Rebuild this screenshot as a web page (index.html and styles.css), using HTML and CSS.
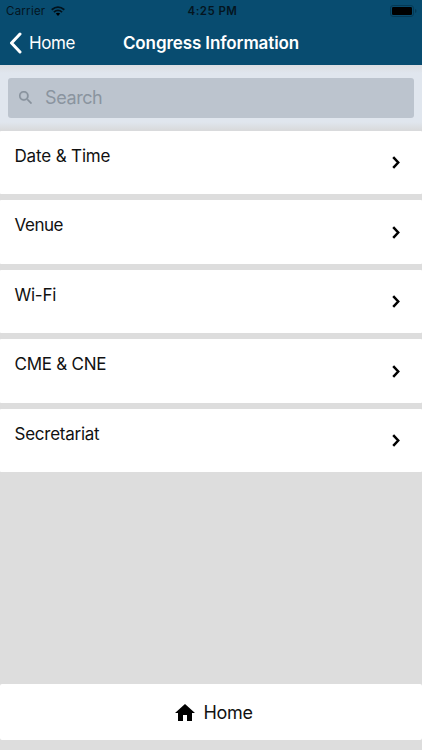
FILE: index.html
```
<!DOCTYPE html>
<html lang="en">
<head>
<meta charset="utf-8">
<title>Congress Information</title>
<link rel="stylesheet" href="styles.css">
</head>
<body>
<div class="app">
  <header class="top">
    <div class="status">
      <div class="carrier"><span class="carrier-name">Carrier</span>
        <svg class="wifi" viewBox="0 0 14 10"><path d="M.7 3.7Q7-1.5 13.3 3.7M2.9 6.1Q7 2.7 11.1 6.1" fill="none" stroke="#02121c" stroke-width="1.8"/><path d="M4.8 7.6Q7 5.9 9.2 7.6L7 10Z"/></svg>
      </div>
      <span class="clock">4:25 PM</span>
      <svg class="battery" viewBox="0 0 27 12"><rect x=".5" y=".5" width="23" height="11" rx="2.7" fill="none" stroke="#053954"/><rect x="2" y="2" width="20" height="8" rx="1.3"/><path d="M25 4q1.5.4 1.5 2T25 8z" fill="#053954"/></svg>
    </div>
    <nav class="nav">
      <a class="back"><svg class="back-icon" viewBox="0 0 13 22"><path d="M11 2 2.5 11 11 20" fill="none" stroke="#fff" stroke-width="3" stroke-linecap="round" stroke-linejoin="round"/></svg><span class="back-label">Home</span></a>
      <h1 class="title">Congress Information</h1>
    </nav>
  </header>
  <div class="search">
    <div class="field"><svg class="glass" viewBox="3 3 17.5 17.5"><path d="M15.5 14h-.79l-.28-.27A6.47 6.47 0 0 0 16 9.5 6.5 6.5 0 1 0 9.5 16c1.61 0 3.09-.59 4.23-1.57l.27.28v.79l5 4.99L20.49 19zm-6 0a4.5 4.5 0 1 1 0-9 4.5 4.5 0 0 1 0 9z" fill="#87919c" stroke="#87919c" stroke-width=".4"/></svg><span class="placeholder">Search</span></div>
  </div>
  <main class="list">
    <div class="row"><span class="label date">Date &amp; Time</span><svg class="chev" viewBox="0 0 8 13"><path d="m1.2 1.2 5 5.3-5 5.3" fill="none" stroke="#000" stroke-width="2.5"/></svg></div>
    <div class="row"><span class="label venue">Venue</span><svg class="chev" viewBox="0 0 8 13"><path d="m1.2 1.2 5 5.3-5 5.3" fill="none" stroke="#000" stroke-width="2.5"/></svg></div>
    <div class="row"><span class="label">Wi-Fi</span><svg class="chev" viewBox="0 0 8 13"><path d="m1.2 1.2 5 5.3-5 5.3" fill="none" stroke="#000" stroke-width="2.5"/></svg></div>
    <div class="row"><span class="label">CME &amp; CNE</span><svg class="chev" viewBox="0 0 8 13"><path d="m1.2 1.2 5 5.3-5 5.3" fill="none" stroke="#000" stroke-width="2.5"/></svg></div>
    <div class="row"><span class="label">Secretariat</span><svg class="chev" viewBox="0 0 8 13"><path d="m1.2 1.2 5 5.3-5 5.3" fill="none" stroke="#000" stroke-width="2.5"/></svg></div>
  </main>
  <footer class="home"><svg class="house" viewBox="2 3 20 17"><path d="M10 20v-6h4v6h5v-8h3L12 3 2 12h3v8z"/></svg><span class="home-label">Home</span></footer>
</div>
</body>
</html>
```
FILE: styles.css
```
* { box-sizing: border-box; }
body { margin: 0; background: #ddd; font-family: Inter, "Liberation Sans", sans-serif; color: #111; }
svg { display: block; flex: none; }
.app { width: 422px; height: 750px; display: flex; flex-direction: column; overflow: hidden; }
.top { height: 65px; flex: none; background: #084c70; }
.status { height: 21px; display: grid; grid-template-columns: 1fr auto 1fr; align-items: center; padding: 0 5px 0 6px; color: #000; font-size: 11.5px; }
.carrier { display: flex; align-items: center; gap: 6px; }
.carrier-name { letter-spacing: .25px; color: #04151f; }
.wifi { width: 14px; height: 10px; }
.clock { font-weight: 600; letter-spacing: .45px; color: #04151f; padding-left: 2px; }
.battery { width: 27px; height: 12px; justify-self: end; }
.nav { height: 44px; display: grid; grid-template-columns: 1fr auto 1fr; align-items: center; color: #fff; padding: 0 9px; }
.back { display: flex; align-items: center; gap: 7px; font-size: 17px; }
.back-icon { width: 13px; height: 22px; }
.back-label { letter-spacing: -.4px; }
.title { margin: 0; font-size: 17px; font-weight: 600; letter-spacing: -.1px; }
.search { height: 65.5px; flex: none; padding: 12.5px 8px 0; background: linear-gradient(#dcdde1, #e0e6ee 8px, #e0e6ee 57px, #d9dadc 65px); }
.field { height: 40.5px; background: #bcc4ce; border-radius: 3px; display: flex; align-items: center; padding-left: 11px; gap: 13px; }
.glass { width: 13px; height: 13px; }
.placeholder { font-size: 18px; color: #8a949f; letter-spacing: -.4px; }
.list { display: flex; flex-direction: column; gap: 6px; }
.row { height: 63.6px; background: #fff; border-radius: 1px; display: flex; justify-content: space-between; padding: 14px 22px 0 14.5px; }
.label { font-size: 17px; line-height: 22px; letter-spacing: -.25px; }
.date { letter-spacing: -.15px; }
.venue { letter-spacing: -.45px; }
.chev { width: 8px; height: 13px; margin-top: 11.5px; }
.home { height: 56px; margin-top: auto; margin-bottom: 10px; background: #fff; border-radius: 2px; display: flex; align-items: center; justify-content: center; gap: 8px; padding-left: 6px; }
.house { width: 20px; height: 17px; }
.home-label { font-size: 18px; letter-spacing: -.3px; }
```
